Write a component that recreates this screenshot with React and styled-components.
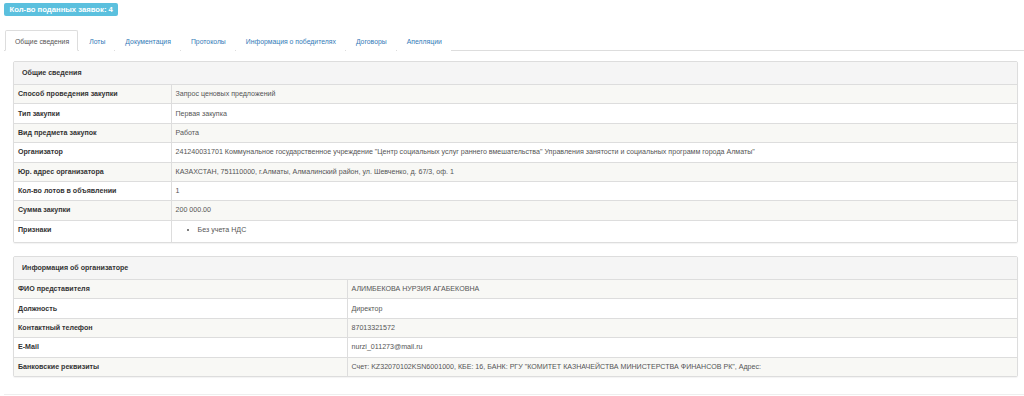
import styled, { createGlobalStyle } from 'styled-components';

const GlobalStyle = createGlobalStyle`
  html, body {
    margin: 0;
    padding: 0;
    background: #fff;
  }
  body {
    font-family: "Liberation Sans", Arial, sans-serif;
    font-size: 7.1px;
    color: #333;
  }
  * {
    box-sizing: border-box;
  }
`;

const Page = styled.div`
  width: 1024px;
  height: 396px;
  padding: 3px 0 0 4px;
  overflow: hidden;
`;

const Badge = styled.span`
  display: inline-block;
  height: 13px;
  padding: 0 5.5px;
  border-radius: 2px;
  background-color: #5bc0de;
  color: #fff;
  font-weight: bold;
  font-size: 7.7px;
  line-height: 13px;
`;

const Tabs = styled.ul`
  display: flex;
  margin: 14px 0 0 0;
  padding: 0 0 0 1px;
  list-style: none;
  border-bottom: 1px solid #ddd;
`;

const Tab = styled.li`
  height: 21px;
  margin-right: 1px;
  margin-bottom: -1px;
  padding: 0 8px 0 9px;
  border: 1px solid ${(p) => (p.$active ? '#ddd' : 'transparent')};
  border-bottom-color: ${(p) => (p.$active ? '#fff' : 'transparent')};
  border-radius: 2px 2px 0 0;
  background: #fff;
  color: ${(p) => (p.$active ? '#555' : '#337ab7')};
  font-size: 6.85px;
  line-height: 21px;
  white-space: nowrap;
`;

const TabContent = styled.div`
  padding: 10px 6px 0 9px;
`;

const Panel = styled.div`
  margin-bottom: 13px;
  border: 1px solid #ddd;
  border-radius: 2px;
  background: #fff;
  box-shadow: 0 1px 1px rgba(0, 0, 0, 0.05);
  overflow: hidden;
`;

const PanelHeading = styled.div`
  height: 22px;
  padding: 0 8px;
  background-color: #f5f5f5;
  font-weight: bold;
  font-size: 7.1px;
  line-height: 22px;
  color: #333;
`;

const Table = styled.table`
  width: 100%;
  border-collapse: collapse;
  table-layout: fixed;
`;

const Row = styled.tr`
  background-color: ${(p) => (p.$striped ? '#f8f8f5' : '#fff')};
`;

const Label = styled.td`
  width: ${(p) => p.$width}px;
  padding: 4.2px 4px;
  border-top: 1px solid #ddd;
  border-right: 1px solid #ddd;
  font-weight: bold;
  font-size: 7.1px;
  line-height: 10px;
  vertical-align: top;
  color: #333;
`;

const Value = styled.td`
  padding: 4.2px 4px;
  border-top: 1px solid #ddd;
  line-height: 10px;
  vertical-align: top;
  color: #555;
`;

const List = styled.ul`
  margin: 0 0 3px 0;
  padding-left: 22px;
`;

const Divider = styled.div`
  margin-top: 17px;
  border-top: 1px solid #eee;
`;

const tabs = [
  'Общие сведения',
  'Лоты',
  'Документация',
  'Протоколы',
  'Информация о победителях',
  'Договоры',
  'Апелляции',
];

const general = [
  ['Способ проведения закупки', 'Запрос ценовых предложений'],
  ['Тип закупки', 'Первая закупка'],
  ['Вид предмета закупок', 'Работа'],
  [
    'Организатор',
    '241240031701 Коммунальное государственное учреждение "Центр социальных услуг раннего вмешательства" Управления занятости и социальных программ города Алматы"',
  ],
  ['Юр. адрес организатора', 'КАЗАХСТАН, 751110000, г.Алматы, Алмалинский район, ул. Шевченко, д. 67/3, оф. 1'],
  ['Кол-во лотов в объявлении', '1'],
  ['Сумма закупки', '200 000.00'],
];

const organizer = [
  ['ФИО представителя', 'АЛИМБЕКОВА НУРЗИЯ АГАБЕКОВНА'],
  ['Должность', 'Директор'],
  ['Контактный телефон', '87013321572'],
  ['E-Mail', 'nurzi_011273@mail.ru'],
  ['Банковские реквизиты', 'Счет: KZ32070102KSN6001000, КБЕ: 16, БАНК: РГУ "КОМИТЕТ КАЗНАЧЕЙСТВА МИНИСТЕРСТВА ФИНАНСОВ РК", Адрес:'],
];

function App() {
  return (
    <>
      <GlobalStyle />
      <Page>
        <Badge>Кол-во поданных заявок: 4</Badge>
        <Tabs>
          {tabs.map((t, i) => (
            <Tab key={t} $active={i === 0}>
              {t}
            </Tab>
          ))}
        </Tabs>
        <TabContent>
          <Panel>
            <PanelHeading>Общие сведения</PanelHeading>
            <Table>
              <tbody>
                {general.map(([label, value], i) => (
                  <Row key={label} $striped={i % 2 === 0}>
                    <Label $width={157}>{label}</Label>
                    <Value>{value}</Value>
                  </Row>
                ))}
                <Row>
                  <Label $width={157}>Признаки</Label>
                  <Value>
                    <List>
                      <li>Без учета НДС</li>
                    </List>
                  </Value>
                </Row>
              </tbody>
            </Table>
          </Panel>
          <Panel>
            <PanelHeading>Информация об организаторе</PanelHeading>
            <Table>
              <tbody>
                {organizer.map(([label, value], i) => (
                  <Row key={label} $striped={i % 2 === 0}>
                    <Label $width={333}>{label}</Label>
                    <Value>{value}</Value>
                  </Row>
                ))}
              </tbody>
            </Table>
          </Panel>
        </TabContent>
        <Divider />
      </Page>
    </>
  );
}

export default App;
